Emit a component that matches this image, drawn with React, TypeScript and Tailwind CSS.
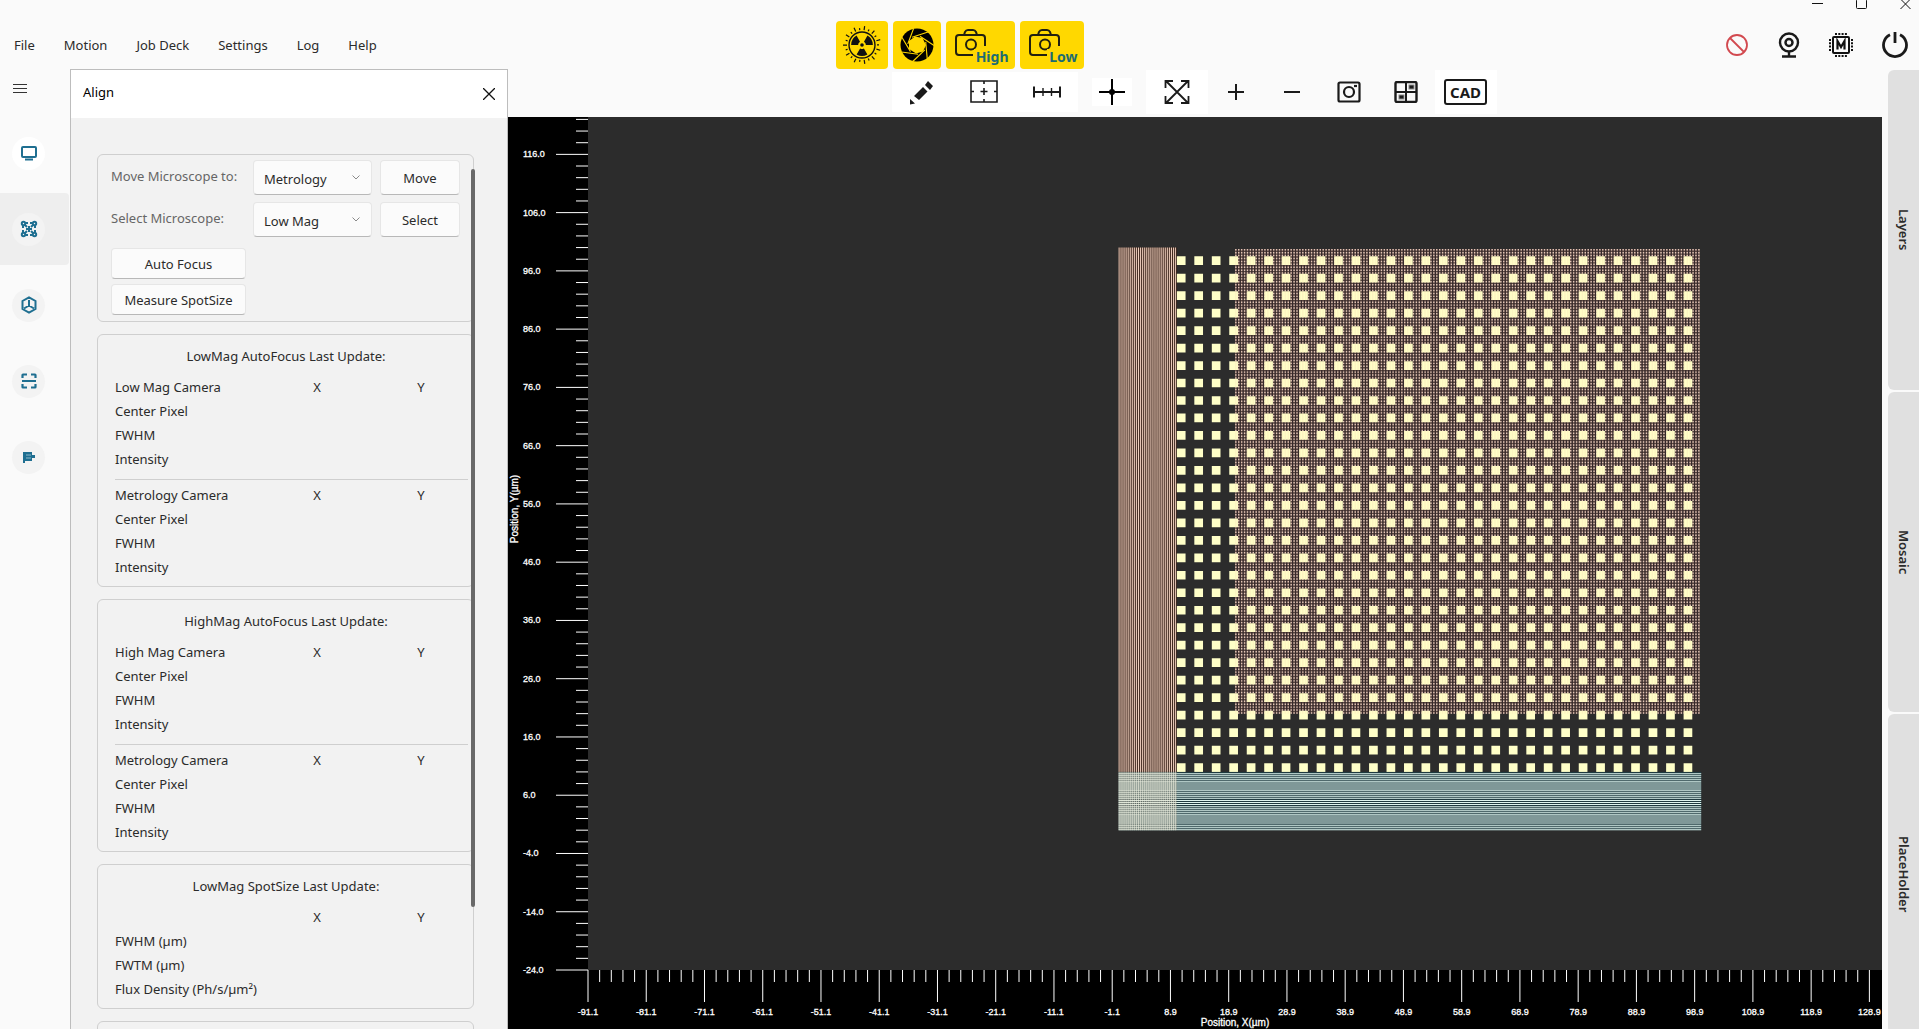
import React from "react";

const UNIT = 5.826;
const AXIS_X = 80;
const AXIS_Y = 853;
const px = (v: number) => AXIS_X + (v + 91.1) * 5.8245;
const py = (v: number) => AXIS_Y - (v + 24) * UNIT;
const range = (n: number) => Array.from({ length: n }, (_, i) => i);

function Chart() {
  const size = 100 * UNIT;
  const stripes = range(30)
    .map((i) => `M${px(i / 3)} ${py(100)}h0.97v${90 * UNIT}h-0.97z`)
    .join("");
  const overlapStripes = range(30)
    .map((i) => `M${px(i / 3)} ${py(10)}h0.97v${10 * UNIT}h-0.97z`)
    .join("");
  const bars = range(30)
    .map((i) => `M${px(0)} ${py(i / 3) - 0.97}h${size}v0.97h-${size}z`)
    .join("");
  const squares = range(900)
    .map((i) => {
      const c = i % 30;
      const r = Math.floor(i / 30);
      return `M${px(10 + c * 3)} ${py(11.5 + r * 3)}h8.7v8.7h-8.7z`;
    })
    .join("");
  const meshCols = range(160)
    .map((i) => `M${px(20 + i / 2)} ${py(99.75)}h1.46v${79.75 * UNIT}h-1.46z`)
    .join("");
  const meshRows = range(159)
    .map((i) => `M${px(20)} ${py(20.5 + i / 2)}h${79.75 * UNIT}v1.46h-${79.75 * UNIT}z`)
    .join("");

  return (
    <svg className="block h-full w-full bg-black font-['Liberation_Sans',sans-serif]" role="img" aria-label="Position map">
      <rect x={AXIS_X} y="0" width="100%" height={AXIS_Y} fill="#2c2c2c" />
      <rect x={px(0)} y={py(100)} width={10 * UNIT} height={90 * UNIT} fill="#40291f" />
      <path d={stripes} fill="#f0d0bf" />
      <rect x={px(20)} y={py(99.75)} width={79.75 * UNIT} height={79.75 * UNIT} fill="#30262a" />
      <path d={meshCols} fill="#e2c6b8" />
      <path d={meshRows} fill="#382a2a" />
      <path d={squares} fill="#ffffc8" />
      <path d={meshCols} fill="#f5c8a8" opacity="0.2" />
      <rect x={px(0)} y={py(10)} width={size} height={10 * UNIT} fill="#1f3a40" />
      <path d={bars} fill="#dff6ef" />
      <rect x={px(0)} y={py(10)} width={10 * UNIT} height={10 * UNIT} fill="#c4b49c" opacity="0.35" />
      <path d={overlapStripes} fill="#f4f4e4" opacity="0.6" />

      {range(74).map((i) => {
        const y = py(122 - i * 2);
        const major = i % 5 === 3;
        return <line key={i} x1={major ? 48 : 68} x2={AXIS_X} y1={y} y2={y} stroke="#fff" strokeWidth="1" />;
      })}
      {range(111).map((i) => {
        const x = px(-91.1 + i * 2);
        return <line key={i} x1={x} x2={x} y1={AXIS_Y} y2={AXIS_Y + (i % 5 === 0 ? 32 : 12)} stroke="#fff" strokeWidth="1" />;
      })}
      <g fill="#fff" stroke="#fff" strokeWidth="0.3" fontSize="9">
        {range(15).map((i) => (
          <text key={i} x="15" y={py(116 - i * 10) + 3}>
            {(116 - i * 10).toFixed(1)}
          </text>
        ))}
        {range(23).map((i) => (
          <text key={i} x={px(-91.1 + i * 10)} y="898" textAnchor="middle">
            {(-91.1 + i * 10).toFixed(1)}
          </text>
        ))}
      </g>
      <g fill="#fff" stroke="#fff" strokeWidth="0.3" fontSize="10">
        <text x="727" y="909" textAnchor="middle">Position, X(µm)</text>
        <text transform="translate(10 392) rotate(-90)" textAnchor="middle">Position, Y(µm)</text>
      </g>
    </svg>
  );
}

function RadiationIcon() {
  return (
    <svg width="40" height="40" viewBox="-20 -20 40 40" aria-hidden="true">
      <circle r="13" fill="none" stroke="#111" strokeWidth="1.4" />
      {range(22).map((i) => (
        <line key={i} y1="-15" y2={i % 2 ? -17 : -19} stroke="#111" strokeWidth="1.2" transform={`rotate(${i * 16.36 + 8})`} />
      ))}
      <circle r="1.8" fill="#111" />
      {[0, 120, 240].map((a) => (
        <path key={a} transform={`rotate(${a})`} d="M-1.9 3.4L-5.4 9.4A10.8 10.8 0 0 0 5.4 9.4L1.9 3.4A3.9 3.9 0 0 1-1.9 3.4Z" fill="#111" />
      ))}
    </svg>
  );
}

function ApertureIcon() {
  return (
    <svg width="36" height="36" viewBox="-18 -18 36 36" aria-hidden="true">
      <circle r="16.5" fill="#000" />
      <path d="M-2-8.5L5.5-7 9 0 6 6.5-1 8.5-8 4-8-4Z" fill="#ffd800" />
      {range(7).map((i) => (
        <line key={i} x1="-5" y1="-7.8" x2="11" y2="-13" stroke="#ffd800" strokeWidth="1.1" transform={`rotate(${i * 51.43})`} />
      ))}
    </svg>
  );
}

function CameraIcon() {
  return (
    <svg width="32" height="30" viewBox="0 0 32 30" fill="none" stroke="#222010" strokeWidth="2" aria-hidden="true">
      <path d="M19 27H5Q2 27 2 24V10Q2 7 5 7H28Q31 7 31 10V18" />
      <path d="M10 7L11 4Q12 2 14 2H19Q21 2 22 4L23 7" />
      <circle cx="17" cy="16.500" r="5" />
    </svg>
  );
}

function CameraButton({ label, width }: { label: string; width: string }) {
  return (
    <button className={`${width} relative h-12 rounded bg-[#ffd800] pb-1 pl-2`}>
      <CameraIcon />
      <span className="absolute right-1.5 bottom-1 bg-[#ffd800] pl-0.5 text-sm leading-4 font-bold text-[#1c6c72]">{label}</span>
    </button>
  );
}

const S = { fill: "none", stroke: "#1a1a1a", strokeWidth: 2 };

const tools: { name: string; cls: string; icon: React.ReactNode }[] = [
  {
    name: "Draw",
    cls: "h-10 w-[61px] bg-white",
    icon: (
      <svg width="26" height="26" viewBox="0 0 26 26" fill="#1a1a1a">
        <path d="M5 17L14 8 18.500 12.500 10 21ZM16 6L19 2 24 7 21 11ZM1 20L6 24.500 1 25.500Z" />
      </svg>
    ),
  },
  {
    name: "Frame",
    cls: "h-10 w-[63px] bg-white",
    icon: (
      <svg width="28" height="24" viewBox="0 0 28 24" {...S} strokeWidth="1.6">
        <path d="M1 1H27V22H1ZM14 1V4M14 19V22M1 11.500H4M24 11.500H27M14 8V15M10.500 11.500H17.500" />
      </svg>
    ),
  },
  {
    name: "Measure",
    cls: "mr-3.5 h-10 w-[62px] bg-white",
    icon: (
      <svg width="28" height="14" viewBox="0 0 28 14" {...S}>
        <path d="M1 1.500V12.500M27 1.500V12.500M1 7H27" />
        <path d="M10 3V11M18.500 3V11" strokeWidth="1.4" />
      </svg>
    ),
  },
  {
    name: "Crosshair",
    cls: "mr-3.5 h-7 w-10 bg-white",
    icon: (
      <svg width="26" height="26" viewBox="0 0 26 26" {...S} stroke="#000">
        <path d="M13 0V26M0 13H26" />
        <circle cx="13" cy="13" r="3" fill="#000" stroke="none" />
      </svg>
    ),
  },
  {
    name: "Fit",
    cls: "h-11 w-[62px] bg-white",
    icon: (
      <svg width="26" height="26" viewBox="0 0 26 26" {...S} strokeWidth="1.8">
        <path d="M2 2L24 24M24 2L2 24M1.500 9V2H9M17 2H24.500V9M24.500 17V24H17M9 24H1.500V17" />
      </svg>
    ),
  },
  {
    name: "Zoom in",
    cls: "h-10 w-14",
    icon: (
      <svg width="18" height="18" viewBox="0 0 18 18" {...S}>
        <path d="M9 1V17M1 9H17" />
      </svg>
    ),
  },
  {
    name: "Zoom out",
    cls: "h-10 w-[57px]",
    icon: (
      <svg width="18" height="18" viewBox="0 0 18 18" {...S}>
        <path d="M1 9H17" />
      </svg>
    ),
  },
  {
    name: "Capture",
    cls: "h-10 w-[57px]",
    icon: (
      <svg width="24" height="22" viewBox="0 0 24 22" {...S} strokeWidth="2.2">
        <rect x="1.500" y="1.500" width="21" height="19" rx="1.500" />
        <circle cx="12" cy="11" r="5" />
        <path d="M17 5H20" />
      </svg>
    ),
  },
  {
    name: "Tiles",
    cls: "h-10 w-[57px]",
    icon: (
      <svg width="24" height="22" viewBox="0 0 24 22" {...S}>
        <rect x="1.500" y="1" width="21" height="20" rx="1.500" strokeWidth="2.400" />
        <path d="M12 1V21M1 11H23" />
        <rect x="15" y="4" width="5" height="4" fill="#1a1a1a" stroke="#888" strokeWidth="1" />
        <rect x="5" y="14" width="5" height="4" fill="#1a1a1a" stroke="#888" strokeWidth="1" />
      </svg>
    ),
  },
  {
    name: "CAD",
    cls: "h-11 w-[62px] bg-white",
    icon: (
      <span className="flex h-[26px] w-[43px] items-center justify-center rounded-[3px] border-2 border-[#1a1a1a] text-[15px] leading-none font-bold">
        CAD
      </span>
    ),
  },
];

const sideItems: { name: string; icon: React.ReactNode }[] = [
  {
    name: "Display",
    icon: (
      <svg width="18" height="16" viewBox="0 0 18 16" fill="none" stroke="currentColor" strokeWidth="2">
        <rect x="2" y="2" width="14" height="10" rx="1" />
        <path d="M5 14.500H13" />
      </svg>
    ),
  },
  {
    name: "Align",
    icon: (
      <svg width="18" height="18" viewBox="0 0 18 18" fill="none" stroke="currentColor" strokeWidth="2">
        <circle cx="3.500" cy="3.500" r="1.700" />
        <circle cx="14.500" cy="3.500" r="1.700" />
        <circle cx="3.500" cy="14.500" r="1.700" />
        <circle cx="14.500" cy="14.500" r="1.700" />
        <path d="M5 3H8M10 3H13M5 15H8M10 15H13M3 5V8M3 10V13M15 5V8M15 10V13M9 6V12M6 9H12M5 5L7 7M13 5L11 7M5 13L7 11M13 13L11 11" />
      </svg>
    ),
  },
  {
    name: "Model",
    icon: (
      <svg width="18" height="18" viewBox="0 0 18 18" fill="none" stroke="currentColor" strokeWidth="2">
        <path d="M9 1.300L15.500 5V13L9 16.700 2.500 13V5ZM9 4V10M9 9.500L4 12.500M9 9.500L14 12.500" />
      </svg>
    ),
  },
  {
    name: "Scan",
    icon: (
      <svg width="16" height="16" viewBox="0 0 16 16" fill="none" stroke="currentColor" strokeWidth="2.200">
        <path d="M1.500 5V2Q1.500 1.500 2 1.500H6M10 1.500H14Q14.500 1.500 14.500 2V5M1.500 11V14Q1.500 14.500 2 14.500H6M10 14.500H14Q14.500 14.500 14.500 14V11M1 8H15" />
      </svg>
    ),
  },
  {
    name: "Report",
    icon: (
      <svg width="12" height="12" viewBox="0 0 12 12" fill="currentColor">
        <path d="M0 1H2V12H0ZM2 1H9V4H12V7H9V10H2Z" />
        <path d="M3 4H8M3 7H8" stroke="#8fb9ca" />
      </svg>
    ),
  },
];

const BTN = "rounded border border-[#e6e6e6] border-b-[#b8b8b8] bg-[#fbfbfb] text-[#2b2b2b]";

function Picker({ id, options }: { id: string; options: string[] }) {
  return (
    <div className="relative">
      <select id={id} className={`${BTN} h-[35px] w-full appearance-none pl-2.5 pt-0.5`}>
        {options.map((o) => (
          <option key={o}>{o}</option>
        ))}
      </select>
      <svg className="pointer-events-none absolute top-[15px] right-3" width="8" height="5" viewBox="0 0 8 5" fill="none" stroke="#8a8a8a">
        <path d="M.5.5L4 4 7.500.5" />
      </svg>
    </div>
  );
}

function Rows({ head, rows }: { head: string; rows: string[] }) {
  return (
    <table className="w-full table-fixed text-left">
      <thead>
        <tr className="h-6">
          <th className="w-[150px] p-0 font-normal">{head}</th>
          <th className="p-0 text-center font-normal">X</th>
          <th className="p-0 text-center font-normal">Y</th>
        </tr>
      </thead>
      <tbody>
        {rows.map((r) => (
          <tr key={r} className="h-6">
            <td className="p-0">{r}</td>
            <td />
            <td />
          </tr>
        ))}
      </tbody>
    </table>
  );
}

const CARD = "rounded-md border border-[#cfcfcf]";
const CAMERA_ROWS = ["Center Pixel", "FWHM", "Intensity"];

function ResultCard({ title, children }: { title: string; children?: React.ReactNode }) {
  return (
    <section className={`${CARD} pt-[9px] pb-[7px] pl-[17px]`}>
      <h3 className="mb-[7px] h-6 pr-4 text-center leading-6">{title}</h3>
      {children}
    </section>
  );
}

function AlignPanel() {
  return (
    <aside className="relative flex w-[438px] shrink-0 flex-col overflow-hidden border border-b-0 border-[#bdbdbd] bg-[#f2f2f2] text-[#2b2b2b]">
      <header className="flex h-12 shrink-0 items-center justify-between bg-white pr-3 pl-3 text-black">
        <h2 className="pb-0.5">Align</h2>
        <button aria-label="Close">
          <svg width="12" height="12" viewBox="0 0 12 12" stroke="#111" strokeWidth="1.300">
            <path d="M0 0L12 12M12 0L0 12" />
          </svg>
        </button>
      </header>
      <div className="flex flex-col gap-3 pt-9 pr-[33px] pl-[26px] leading-[18px]">
        <section className={`${CARD} h-[168px] shrink-0 px-[13px] pt-[5px]`}>
          <div className="grid grid-cols-[134px_119px_80px] items-center gap-x-2 gap-y-[7px]">
            <label htmlFor="move" className="whitespace-nowrap pb-1 text-[#666]">Move Microscope to:</label>
            <Picker id="move" options={["Metrology", "Low Mag", "High Mag"]} />
            <button className={`${BTN} h-[35px]`}>Move</button>
            <label htmlFor="scope" className="whitespace-nowrap pb-1 text-[#666]">Select Microscope:</label>
            <Picker id="scope" options={["Low Mag", "High Mag"]} />
            <button className={`${BTN} h-[35px]`}>Select</button>
          </div>
          <div className="mt-[11px] flex w-[135px] flex-col gap-[5px]">
            <button className={`${BTN} h-[31px]`}>Auto Focus</button>
            <button className={`${BTN} h-[31px]`}>Measure SpotSize</button>
          </div>
        </section>
        <ResultCard title="LowMag AutoFocus Last Update:">
          <Rows head="Low Mag Camera" rows={CAMERA_ROWS} />
          <hr className="mt-2 mr-[5px] mb-[3px] border-[#cfcfcf]" />
          <Rows head="Metrology Camera" rows={CAMERA_ROWS} />
        </ResultCard>
        <ResultCard title="HighMag AutoFocus Last Update:">
          <Rows head="High Mag Camera" rows={CAMERA_ROWS} />
          <hr className="mt-2 mr-[5px] mb-[3px] border-[#cfcfcf]" />
          <Rows head="Metrology Camera" rows={CAMERA_ROWS} />
        </ResultCard>
        <ResultCard title="LowMag SpotSize Last Update:">
          <Rows head="" rows={["FWHM (µm)", "FWTM (µm)", "Flux Density (Ph/s/µm²)"]} />
        </ResultCard>
        <section className={`${CARD} h-36`} />
      </div>
      <div className="absolute top-[99px] right-8 h-[738px] w-1 rounded-full bg-[#696969]" />
    </aside>
  );
}

export default function App() {
  return (
    <div className="flex h-screen flex-col overflow-hidden bg-[#fafafa] font-['Noto_Sans','Open_Sans',sans-serif] text-[13px] text-[#2b2b2b]">
      <header className="shrink-0">
        <div className="flex h-[9px] items-end justify-end gap-[33px] pr-2">
          <button aria-label="Minimize">
            <svg className="block" width="11" height="9" viewBox="0 0 11 9" stroke="#111"><path d="M0 3.500H11" /></svg>
          </button>
          <button aria-label="Maximize">
            <svg className="block" width="11" height="10" viewBox="0 0 11 10" fill="none" stroke="#111"><rect x=".5" y=".5" width="10" height="9" rx="1" /></svg>
          </button>
          <button aria-label="Close window">
            <svg className="block" width="11" height="10" viewBox="0 0 11 10" stroke="#111"><path d="M.5 0L10.500 10M10.500 0L.5 10" /></svg>
          </button>
        </div>
        <div className="grid h-[60px] grid-cols-[1fr_auto_1fr] items-center pt-3">
          <nav className="flex gap-[29px] pt-0.5 pl-3.5">
            {["File", "Motion", "Job Deck", "Settings", "Log", "Help"].map((m) => (
              <button key={m}>{m}</button>
            ))}
          </nav>
          <div className="flex gap-[5px]">
            <button aria-label="X-ray" className="flex h-12 w-[52px] items-center justify-center rounded bg-[#ffd800]"><RadiationIcon /></button>
            <button aria-label="Shutter" className="flex h-12 w-12 items-center justify-center rounded bg-[#ffd800]"><ApertureIcon /></button>
            <CameraButton label="High" width="w-[69px]" />
            <CameraButton label="Low" width="w-16" />
          </div>
          <div className="flex items-center justify-end gap-7 pr-2.5">
            <button aria-label="Stop">
              <svg width="24" height="24" viewBox="0 0 24 24" fill="none" stroke="#d2494f" strokeWidth="1.800"><circle cx="12" cy="12" r="10" /><path d="M5 5L19 19" /></svg>
            </button>
            <button aria-label="Webcam">
              <svg width="24" height="26" viewBox="0 0 24 26" fill="none" stroke="#1a1a1a" strokeWidth="2.400"><circle cx="12" cy="10.500" r="9" /><circle cx="12" cy="10.500" r="3.500" strokeWidth="2.500" /><path d="M12 20V24M5 24.500H19" /></svg>
            </button>
            <button aria-label="Memory">
              <svg width="24" height="24" viewBox="0 0 24 24" fill="none" stroke="#111" strokeWidth="2">
                <rect x="4" y="4" width="16" height="16" rx="1" />
                <path d="M6 1H18M6 23H18M1 6V18M23 6V18" strokeDasharray="2 1.300" />
                <path d="M8.500 16.500V8L12 14 15.500 8V16.500" strokeWidth="2.200" />
              </svg>
            </button>
            <button aria-label="Power">
              <svg width="28" height="28" viewBox="0 0 28 28" fill="none" stroke="#1a1a1a" strokeWidth="2.800"><path d="M9 3.700A11.500 11.500 0 1 0 19 3.700M14 1V12" /></svg>
            </button>
          </div>
        </div>
      </header>

      <div className="flex min-h-0 flex-1">
        <nav className="flex w-[70px] shrink-0 flex-col">
          <button aria-label="Toggle menu" className="mt-3.5 mb-[17px] ml-[13px] h-[11px] w-3.5">
            <svg className="block" width="14" height="11" viewBox="0 0 14 11" stroke="#333"><path d="M0 1.500H14M0 5.500H14M0 9.500H14" /></svg>
          </button>
          <div className="mt-1.5 flex flex-col gap-1">
            {sideItems.map((s, i) => (
              <button key={s.name} aria-label={s.name} className={`flex h-[72px] w-[69px] items-center rounded-r pl-3 ${i === 1 ? "bg-[#eeeeee]" : ""}`}>
                <span className={`flex size-[33px] items-center justify-center rounded-full text-[#1f6f91] ${i === 0 ? "bg-white" : "bg-[#f3f3f3]"}`}>{s.icon}</span>
              </button>
            ))}
          </div>
        </nav>
        <AlignPanel />
        <main className="flex min-w-0 flex-1 flex-col">
          <div className="flex h-12 shrink-0 items-center justify-center pr-0.5 pb-0.5">
            {tools.map((t) => (
              <button key={t.name} aria-label={t.name} className={`flex shrink-0 items-center justify-center text-[#1a1a1a] ${t.cls}`}>{t.icon}</button>
            ))}
          </div>
          <div className="min-h-0 flex-1"><Chart /></div>
        </main>
        <div className="ml-1.5 flex w-[31px] shrink-0 flex-col gap-0.5 pt-px">
          {["Layers", "Mosaic", "PlaceHolder"].map((t) => (
            <button key={t} className="flex h-80 shrink-0 items-center justify-center rounded-l-md bg-[#e0e0e0] font-semibold [writing-mode:vertical-rl]">{t}</button>
          ))}
        </div>
      </div>
    </div>
  );
}
